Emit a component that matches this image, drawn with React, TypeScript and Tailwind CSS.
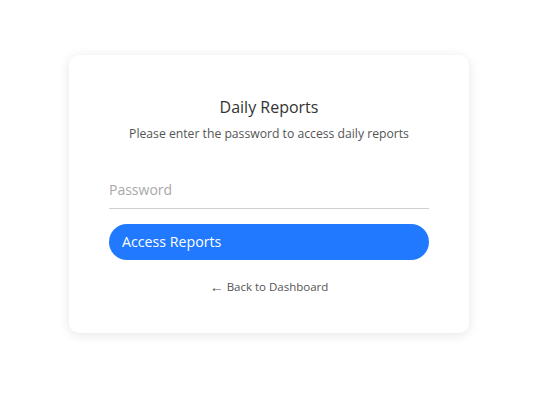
export default function App() {
  return (
    <div className="w-[552px] h-[408px] bg-white flex justify-start pl-[69px] pt-[55px]" style={{ fontFamily: '"Open Sans", "Noto Sans", sans-serif' }}>
      <div className="w-[400px] h-[278px] bg-white rounded-[10px] shadow-[0_2px_12px_rgba(0,0,0,0.10)] px-10 pt-[41px] flex flex-col items-center">
        <h1 className="text-[16px] leading-[22px] text-[#333] font-normal">Daily Reports</h1>
        <p className="mt-[7px] text-[12.2px] leading-[18px] text-[#555]">Please enter the password to access daily reports</p>
        <div className="w-full mt-[34px] border-b border-[#cfcfd4] pb-[7px]">
          <input
            type="password"
            placeholder="Password"
            className="w-full outline-none text-[14px] leading-[20px] text-[#333] placeholder:text-[#a8a8a8] bg-transparent"
          />
        </div>
        <button className="w-full mt-[15px] h-[36px] rounded-[18px] bg-[#2079ff] text-white text-[14.2px] text-left pl-[13px]">
          Access Reports
        </button>
        <a className="mt-[19px] text-[11.5px] leading-[16px] text-[#555] flex items-center gap-[3px]">
          <span className="text-[14px]">←</span>
          <span>Back to Dashboard</span>
        </a>
      </div>
    </div>
  );
}
